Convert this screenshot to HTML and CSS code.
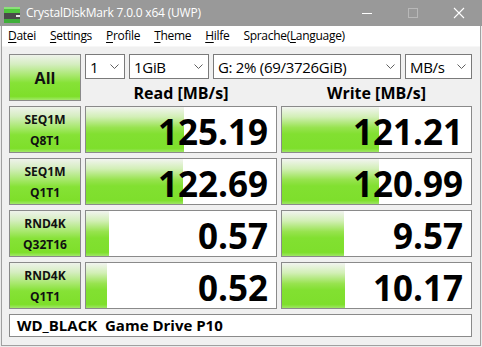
FILE: index.html
```html
<!DOCTYPE html>
<html>
<head>
<meta charset="utf-8">
<link rel="stylesheet" href="styles.css">
</head>
<body>
<div class="window">
  <div class="titlebar">
    <svg class="app-icon" width="20" height="20" viewBox="0 0 20 20">
      <rect x="4" y="3" width="18" height="6" fill="#4fc63d"/>
      <rect x="4" y="3" width="18" height="2" fill="#8be07a"/>
      <rect x="4" y="9" width="18" height="6" fill="#4a4a4a"/>
      <rect x="16" y="11" width="4" height="2" fill="#e8e8e8"/>
      <rect x="4" y="15" width="18" height="4" fill="#3fae3a"/>
    </svg>
    <span class="title">CrystalDiskMark 7.0.0 x64 (UWP)</span>
    <div class="caption">
      <span class="cap"><svg width="12" height="12" viewBox="0 0 12 12"><line x1="1" y1="6.5" x2="11" y2="6.5" stroke="#fff" stroke-width="1"/></svg></span>
      <span class="cap"><svg width="12" height="12" viewBox="0 0 12 12"><rect x="1.5" y="1.5" width="9" height="9" fill="none" stroke="#b8b8b8" stroke-width="1"/></svg></span>
      <span class="cap"><svg width="12" height="12" viewBox="0 0 12 12"><path d="M1 1 L11 11 M11 1 L1 11" stroke="#fff" stroke-width="1.1"/></svg></span>
    </div>
  </div>
  <div class="frame">
    <div class="menubar">
      <span><u>D</u>atei</span>
      <span><u>S</u>ettings</span>
      <span><u>P</u>rofile</span>
      <span><u>T</u>heme</span>
      <span><u>H</u>ilfe</span>
      <span>Sprache(<u>L</u>anguage)</span>
    </div>
    <div class="client">
      <div class="board">
        <div class="btn all">All</div>
        <div class="top-right">
          <div class="combos">
            <div class="combo"><span>1</span><svg class="chev" width="9" height="5" viewBox="0 0 9 5"><polyline points="0.5,0.5 4.5,4.5 8.5,0.5" fill="none" stroke="#606060" stroke-width="1"/></svg></div>
            <div class="combo"><span>1GiB</span><svg class="chev" width="9" height="5" viewBox="0 0 9 5"><polyline points="0.5,0.5 4.5,4.5 8.5,0.5" fill="none" stroke="#606060" stroke-width="1"/></svg></div>
            <div class="combo"><span>G: 2% (69/3726GiB)</span><svg class="chev" width="9" height="5" viewBox="0 0 9 5"><polyline points="0.5,0.5 4.5,4.5 8.5,0.5" fill="none" stroke="#606060" stroke-width="1"/></svg></div>
            <div class="combo"><span>MB/s</span><svg class="chev" width="9" height="5" viewBox="0 0 9 5"><polyline points="0.5,0.5 4.5,4.5 8.5,0.5" fill="none" stroke="#606060" stroke-width="1"/></svg></div>
          </div>
          <div class="headers">
            <div class="hdr">Read [MB/s]</div>
            <div class="hdr">Write [MB/s]</div>
          </div>
        </div>

        <div class="btn label">SEQ1M<br>Q8T1</div>
        <div class="val" style="--w:98px">125.19</div>
        <div class="val" style="--w:97px">121.21</div>

        <div class="btn label">SEQ1M<br>Q1T1</div>
        <div class="val" style="--w:97px">122.69</div>
        <div class="val" style="--w:97px">120.99</div>

        <div class="btn label">RND4K<br>Q32T16</div>
        <div class="val" style="--w:23px">0.57</div>
        <div class="val" style="--w:62px">9.57</div>

        <div class="btn label">RND4K<br>Q1T1</div>
        <div class="val" style="--w:21px">0.52</div>
        <div class="val" style="--w:63px">10.17</div>

        <div class="comment">WD_BLACK  Game Drive P10</div>
      </div>
    </div>
  </div>
</div>
</body>
</html>
```
FILE: styles.css
```css
* {
  box-sizing: border-box;
  margin: 0;
  padding: 0;
}

html, body {
  width: 482px;
  height: 347px;
  overflow: hidden;
}

body {
  font-family: "Open Sans", "Noto Sans", sans-serif;
  background: #ececec;
  color: #000;
}

.window {
  width: 482px;
  height: 347px;
  display: flex;
  flex-direction: column;
  background: #ececec;
}

.titlebar {
  height: 26px;
  flex: none;
  background: #999999;
  display: flex;
  align-items: center;
  color: #fff;
}

.app-icon {
  flex: none;
  margin-top: 1px;
}

.title {
  margin-left: 6px;
  font-size: 12px;
  letter-spacing: -0.2px;
  line-height: 26px;
}

.caption {
  margin-left: auto;
  display: flex;
  height: 26px;
}

.cap {
  width: 46px;
  height: 26px;
  display: flex;
  align-items: center;
  justify-content: center;
}

.frame {
  flex: 1;
  display: flex;
  flex-direction: column;
  margin: 0 1px 1px 1px;
  border: 1px solid #a0a0a0;
  border-top: 0;
  background: #f0f0f0;
}

.menubar {
  height: 20px;
  flex: none;
  background: #fff;
  display: flex;
  gap: 14px;
  padding-left: 6px;
  font-size: 12px;
  line-height: 19px;
  letter-spacing: -0.3px;
  color: #000;
}

.menubar u {
  text-decoration-thickness: 1px;
  text-underline-offset: 2px;
}

.client {
  flex: 1;
  padding: 8px 7px 0 7px;
  border-top: 1px solid #f7f7f7;
}

.board {
  display: grid;
  grid-template-columns: 72px 192px 191px;
  grid-template-rows: 47px 47px 47px 47px 47px 23px;
  column-gap: 4px;
  row-gap: 5px;
  margin-top: -1px;
}

.btn {
  border: 1px solid #8a8a8a;
  background: linear-gradient(to bottom, #eef2ea 0%, #d6eec2 20%, #a8e86e 45%, #86e236 62%, #7edf2a 92%, #a2e86a 100%);
  display: flex;
  align-items: center;
  justify-content: center;
  text-align: center;
  font-weight: 700;
  color: #111;
}

.all {
  font-size: 16px;
}

.label {
  font-size: 12px;
  line-height: 21px;
  padding-top: 1px;
}

.top-right {
  grid-column: 2 / 4;
  display: flex;
  flex-direction: column;
}

.combos {
  display: grid;
  grid-template-columns: 40px 80px 188px 67px;
  column-gap: 4px;
  height: 25px;
}

.combo {
  background: #fff;
  border: 1px solid #7a7a7a;
  display: flex;
  align-items: center;
  padding: 1px 5px 0 4px;
  font-size: 15px;
  letter-spacing: -0.3px;
  line-height: 21px;
  color: #000;
}

.combo span {
  flex: 1;
  white-space: nowrap;
}

.chev {
  flex: none;
  margin-top: -1px;
}

.headers {
  display: grid;
  grid-template-columns: 192px 191px;
  column-gap: 4px;
  height: 22px;
}

.hdr {
  text-align: center;
  font-weight: 700;
  font-size: 16px;
  line-height: 15px;
  padding-top: 7px;
  color: #000;
}

.val {
  border: 1px solid #8a8a8a;
  background:
    linear-gradient(to bottom, #f2f4f0 0%, #d2efb6 22%, #97e34e 46%, #82e031 60%, #7edf2c 92%, #9ee664 100%) 0 0 / var(--w) 100% no-repeat,
    #fff;
  text-align: right;
  font-size: 35px;
  font-weight: 700;
  line-height: 41px;
  padding-top: 4px;
  padding-right: 8px;
  color: #000;
}

.comment {
  grid-column: 1 / 4;
  background: #fff;
  border: 1px solid #8a8a8a;
  font-weight: 700;
  font-size: 15px;
  line-height: 21px;
  padding-left: 7px;
  white-space: pre;
  color: #000;
}
```
